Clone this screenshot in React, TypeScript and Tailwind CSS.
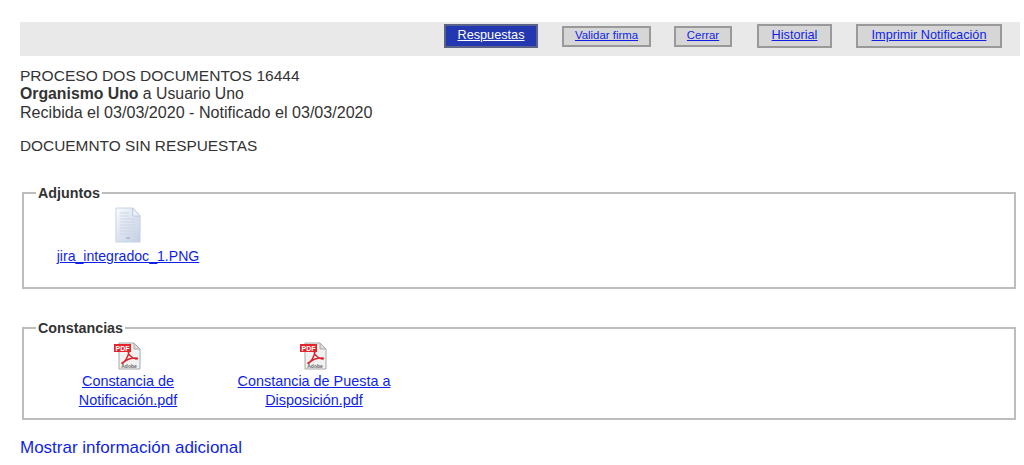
const FONT = "font-['Liberation_Sans',Arial,sans-serif]";

function ToolbarButton({ label, active, small, className }: { label: string; active?: boolean; small?: boolean; className: string }) {
  return (
    <a
      href="#"
      className={`flex items-center justify-center border-2 pb-[1px] underline ${small ? "h-[21px] text-[11.4px]" : "h-[24px] text-[12.7px]"} ${
        active ? "border-[#5a6288] bg-[#2337b0] text-white" : "border-[#999999] bg-[#d6d6d6] text-[#0f1fe8]"
      } ${className}`}
    >
      {label}
    </a>
  );
}

function DocIcon() {
  return (
    <svg width="26" height="36" viewBox="0 0 28 36" preserveAspectRatio="none" className="block">
      <defs>
        <linearGradient id="docFill" x1="0" y1="0" x2="1" y2="1">
          <stop offset="0" stopColor="#fbfcfe" />
          <stop offset="0.55" stopColor="#d9e1ee" />
          <stop offset="1" stopColor="#c3d0e4" />
        </linearGradient>
      </defs>
      <path d="M1 1h18l8 8v26H1z" fill="url(#docFill)" stroke="#c4d2e6" />
      <path d="M19 1v8h8z" fill="#eef2f8" stroke="#b9c8de" />
      <path d="M5 6h10M5 9h10M5 12h17M5 15h17M5 18h17M5 21h17M5 24h17M5 27h17" stroke="#cdd5e2" strokeWidth="1" />
      <path d="M12 31h4" stroke="#8e9cb4" strokeWidth="1" />
    </svg>
  );
}

function PdfIcon() {
  return (
    <svg width="28" height="28" viewBox="0 0 28 28" className="block">
      <path d="M5 1h15l6 6v20H5z" fill="#f1f1f1" stroke="#a8a8a8" />
      <path d="M20 1v6h6z" fill="#dcdcdc" stroke="#a8a8a8" />
      <path
        d="M8 21c3-1 6-6 7-11 0-2-1-2-1-1 0 3 3 7 8 8 2 0 2-1 0-1-4 0-9 1-12 4-2 2-2 2-2 1z"
        fill="none"
        stroke="#d8232a"
        strokeWidth="1.4"
      />
      <rect x="0" y="2" width="17" height="8" fill="#e3242b" />
      <text x="8.5" y="8.8" textAnchor="middle" fontSize="7" fontWeight="700" fill="#ffffff" fontFamily="Liberation Sans">
        PDF
      </text>
      <text x="15" y="26.3" textAnchor="middle" fontSize="5" fontWeight="700" fill="#666666" fontFamily="Liberation Sans">
        Adobe
      </text>
    </svg>
  );
}

function Attachment({ icon, children, className }: { icon: React.ReactNode; children: React.ReactNode; className: string }) {
  return (
    <div className={`flex flex-col items-center text-center ${className}`}>
      {icon}
      <a href="#" className="text-[14.4px] leading-[19px] text-[#0f1fe8] underline">
        {children}
      </a>
    </div>
  );
}

export default function App() {
  return (
    <div className={`${FONT} h-[465px] w-[1024px] overflow-hidden bg-white pt-[22px] text-[#333333]`}>
      <div className="mx-[20px] flex h-[34px] w-[1000px] items-start bg-[#e9e9e9] pt-[2px] pl-[424px]">
        <ToolbarButton label="Respuestas" active className="w-[94px]" />
        <ToolbarButton label="Validar firma" small className="mt-[2px] ml-[24px] w-[89px]" />
        <ToolbarButton label="Cerrar" small className="mt-[2px] ml-[23px] w-[58px]" />
        <ToolbarButton label="Historial" className="ml-[25px] w-[75px]" />
        <ToolbarButton label="Imprimir Notificación" className="ml-[24px] w-[146px]" />
      </div>

      <div className="mt-[11px] ml-[20px] leading-[18px]">
        <p className="text-[15.55px]">PROCESO DOS DOCUMENTOS 16444</p>
        <p className="text-[15.8px]">
          <strong>Organismo Uno</strong> a Usuario Uno
        </p>
        <p className="text-[16.1px]">Recibida el 03/03/2020 - Notificado el 03/03/2020</p>
        <p className="mt-[16px] text-[15.4px]">DOCUEMNTO SIN RESPUESTAS</p>
      </div>

      <fieldset className="mt-[29px] ml-[22px] h-[105px] w-[994px] border-2 border-[#bdbdbd] pl-[12px]">
        <legend className="px-[2px] text-[14.3px] leading-[18px] font-bold">Adjuntos</legend>
        <Attachment icon={<DocIcon />} className="mt-[5px] ml-[19px] w-[146px] gap-[4px]">
          <span className="text-[14.1px]">jira_integradoc_1.PNG</span>
        </Attachment>
      </fieldset>

      <fieldset className="mt-[30px] ml-[22px] flex h-[101px] w-[994px] border-2 border-[#bdbdbd] pl-[12px]">
        <legend className="px-[2px] text-[14.3px] leading-[18px] font-bold">Constancias</legend>
        <div className="flex">
          <Attachment icon={<PdfIcon />} className="mt-[5px] ml-[2px] w-[180px] gap-[2px]">
            Constancia de
            <br />
            Notificación.pdf
          </Attachment>
          <Attachment icon={<PdfIcon />} className="mt-[5px] ml-[6px] w-[180px] gap-[2px]">
            Constancia de Puesta a
            <br />
            Disposición.pdf
          </Attachment>
        </div>
      </fieldset>

      <a href="#" className="mt-[18px] ml-[20px] block text-[17px] leading-[20px] text-[#0f1fe8]">
        Mostrar información adicional
      </a>
    </div>
  );
}
